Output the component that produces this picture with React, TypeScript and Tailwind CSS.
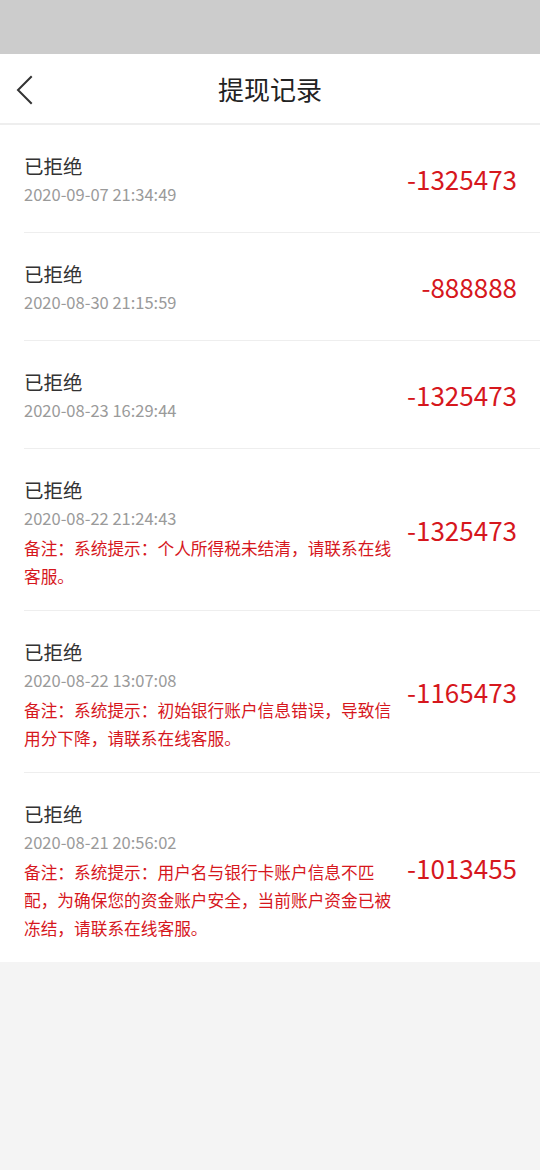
import React from "react";

type Rec = { date: string; amount: string; remark?: string };

const records: Rec[] = [
  { date: "2020-09-07 21:34:49", amount: "-1325473" },
  { date: "2020-08-30 21:15:59", amount: "-888888" },
  { date: "2020-08-23 16:29:44", amount: "-1325473" },
  {
    date: "2020-08-22 21:24:43",
    amount: "-1325473",
    remark: "备注：系统提示：个人所得税未结清，请联系在线客服。",
  },
  {
    date: "2020-08-22 13:07:08",
    amount: "-1165473",
    remark: "备注：系统提示：初始银行账户信息错误，导致信用分下降，请联系在线客服。",
  },
  {
    date: "2020-08-21 20:56:02",
    amount: "-1013455",
    remark:
      "备注：系统提示：用户名与银行卡账户信息不匹配，为确保您的资金账户安全，当前账户资金已被冻结，请联系在线客服。",
  },
];

export default function App() {
  return (
    <div
      className="min-h-[1170px] w-[540px] bg-[#f4f4f4]"
      style={{ fontFamily: '"Noto Sans CJK SC", "Noto Sans", sans-serif' }}
    >
      <div className="h-[54px] bg-[#cccccc]" />
      <div className="relative flex h-[71px] items-center justify-center border-b-2 border-[#eeeeee] bg-white">
        <svg
          className="absolute left-[14px] top-[20px]"
          width="22"
          height="32"
          viewBox="0 0 22 32"
          fill="none"
        >
          <polyline
            points="17,3 4,16 17,29"
            stroke="#333333"
            strokeWidth="2"
            strokeLinecap="square"
            strokeLinejoin="miter"
          />
        </svg>
        <span className="text-[26px] leading-none text-[#222222]">提现记录</span>
      </div>
      <div className="bg-white">
        {records.map((r, i) => (
          <div key={i} className="pl-[24px]">
            <div
              className={
                "flex items-center " +
                (i < records.length - 1 ? "border-b border-[#eeeeee]" : "")
              }
            >
              <div
                className={
                  "w-[382px] shrink-0 pt-[27px] " + (r.remark ? "pb-[20px]" : "pb-[24px]")
                }
              >
                <div className="text-[19.5px] leading-[28px] text-[#333333]">已拒绝</div>
                <div className="text-[16.5px] leading-[28px] text-[#9a9a9a]">{r.date}</div>
                {r.remark && (
                  <div className="mt-[2px] w-[376px] text-[16.7px] leading-[28px] text-[#d6171d]">
                    {r.remark}
                  </div>
                )}
              </div>
              <div className="flex-1 pr-[23px] text-right text-[26px] leading-none text-[#d6171d]">
                {r.amount}
              </div>
            </div>
          </div>
        ))}
      </div>
    </div>
  );
}
